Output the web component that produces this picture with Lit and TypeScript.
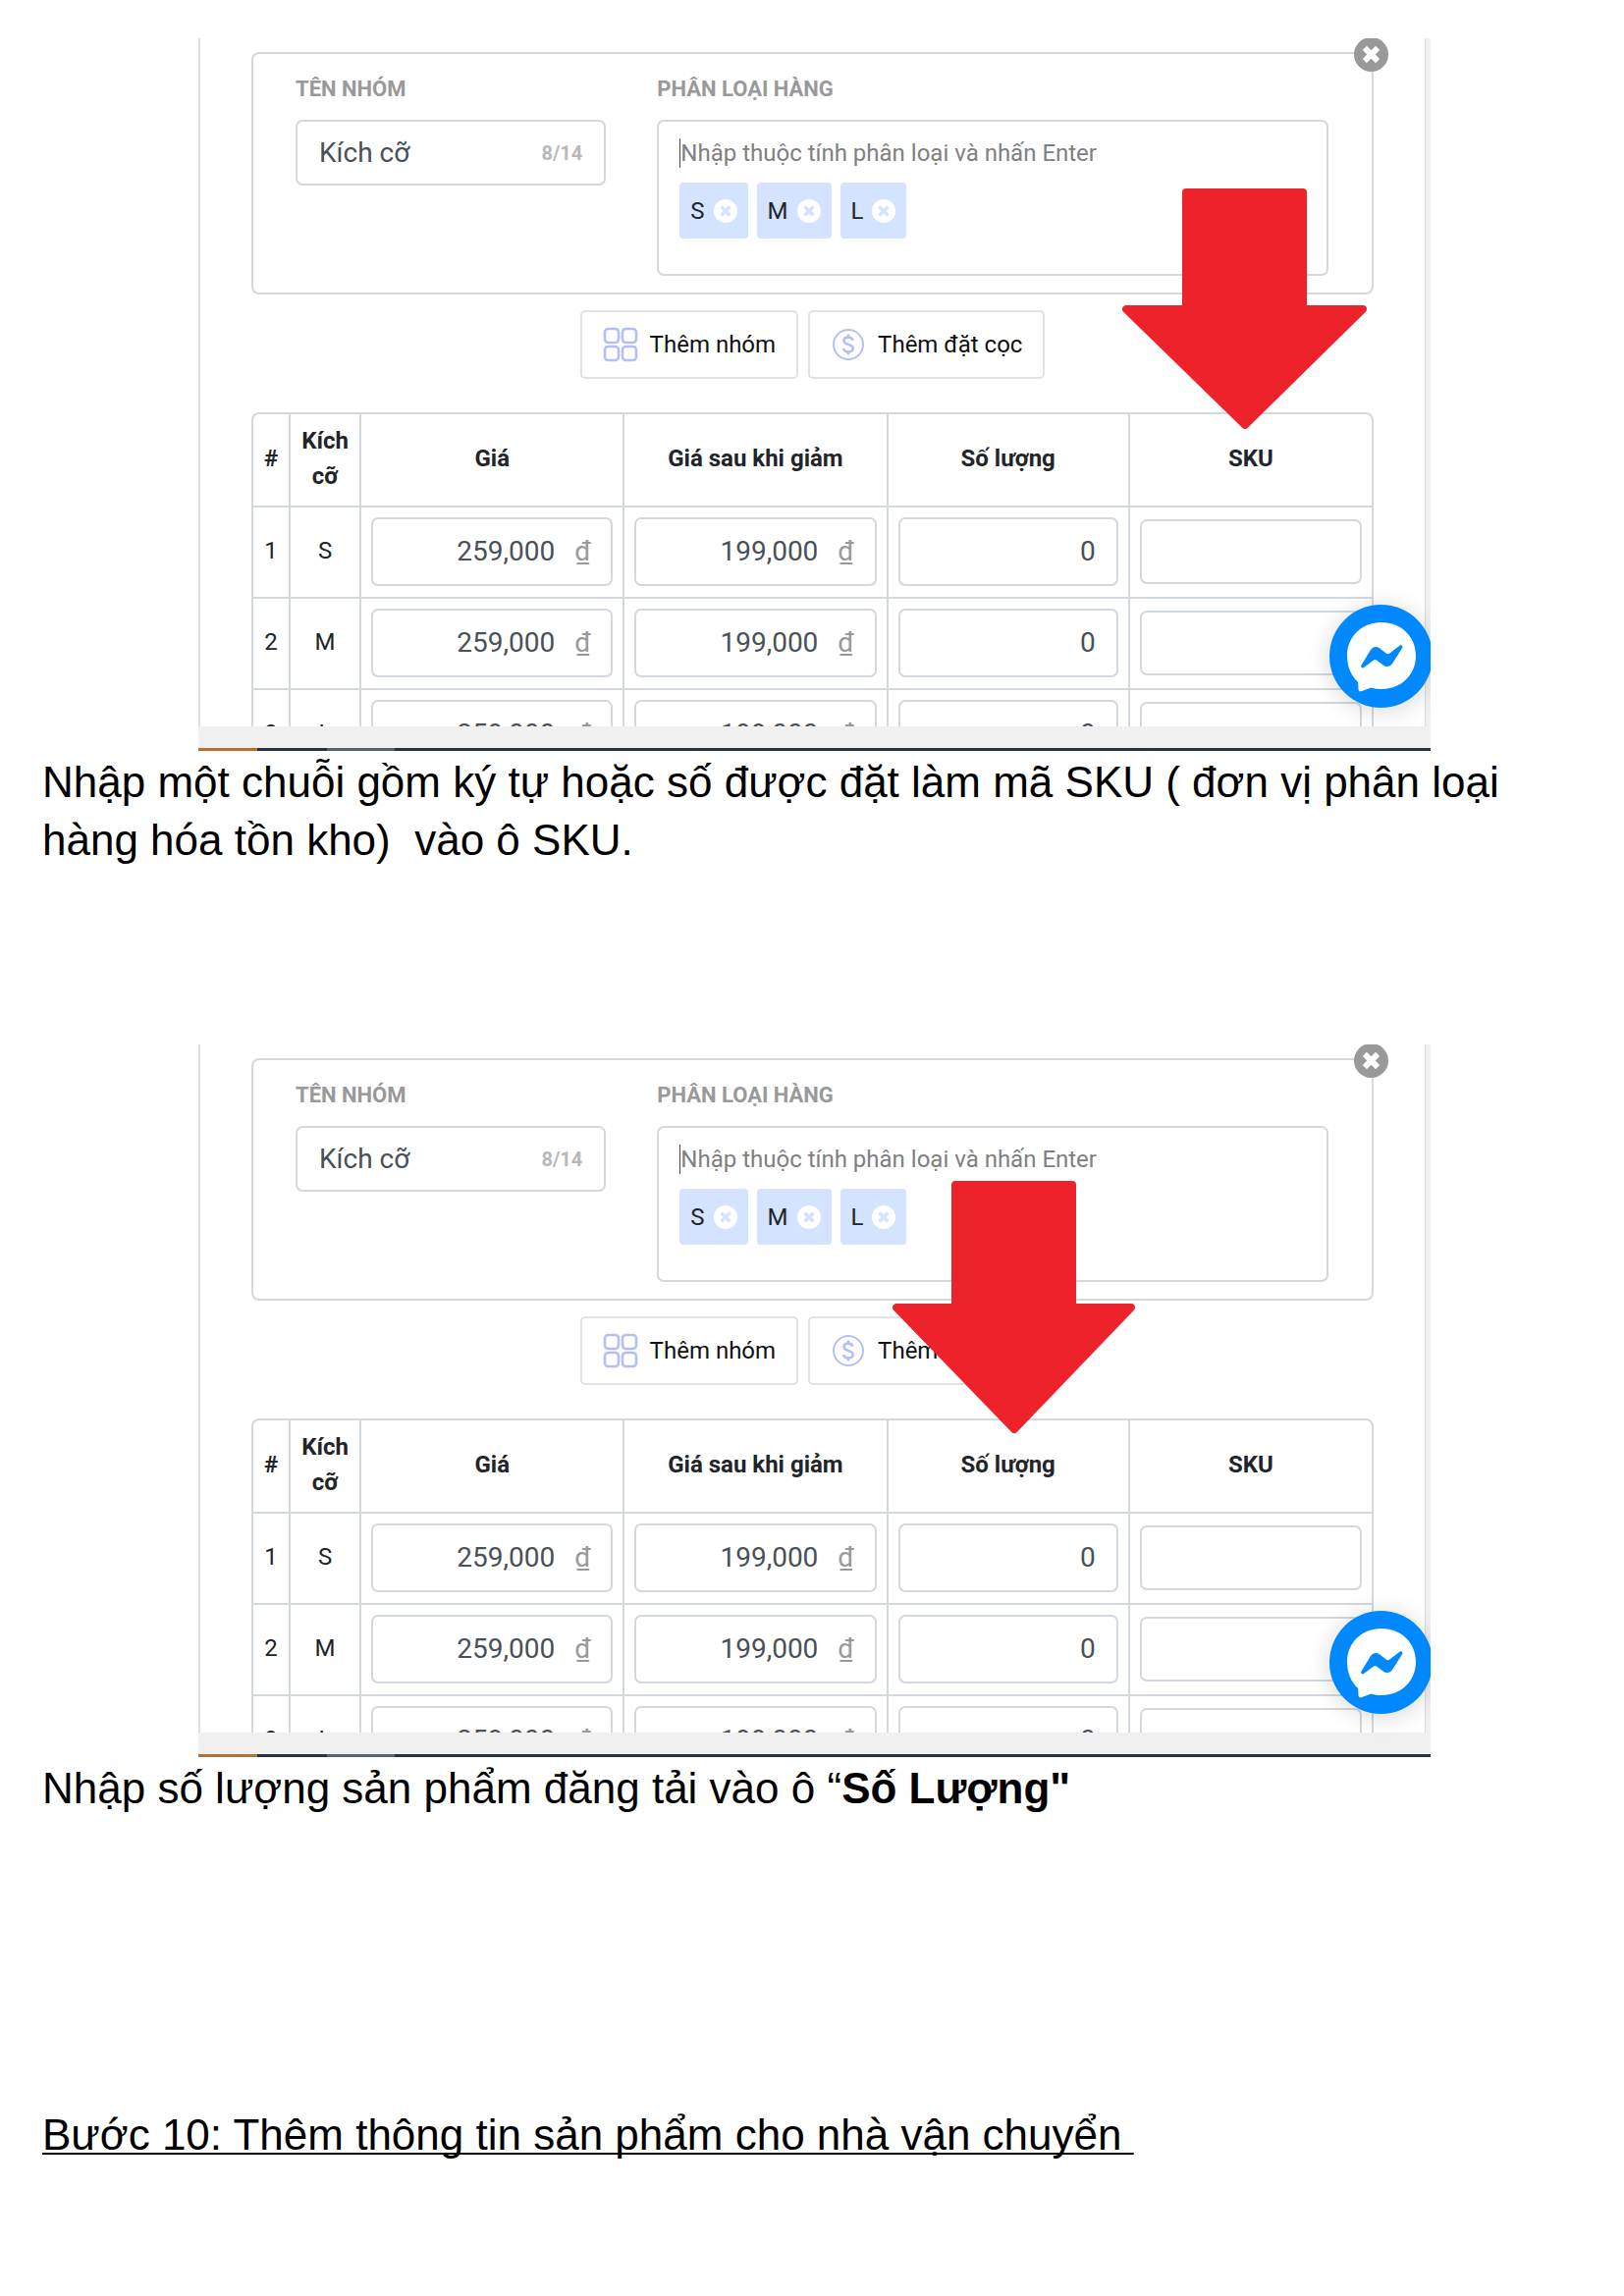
import { LitElement, html, svg, css } from "lit";
import { customElement, property } from "lit/decorators.js";

interface Variant {
  size: string;
  price: string;
  sale: string;
  stock: string;
}

const VARIANTS: Variant[] = [
  { size: "S", price: "259,000", sale: "199,000", stock: "0" },
  { size: "M", price: "259,000", sale: "199,000", stock: "0" },
  { size: "L", price: "259,000", sale: "199,000", stock: "0" },
];

const crossIcon = (cls: string, width: number) => html`
  <svg class=${cls} viewBox="0 0 36 36" aria-hidden="true">
    <circle class="disc" cx="18" cy="18" r="18"></circle>
    <path class="cross" d="M11.200 11.200 24.800 24.800M24.800 11.200 11.200 24.800" stroke-width=${width}></path>
  </svg>
`;

@customElement("variant-form")
export class VariantForm extends LitElement {
  @property() target = "sku";

  static styles = css`
    :host {
      display: block;
      font-family: Roboto, "Liberation Sans", sans-serif;
      font-size: 24px;
      line-height: 36px;
      color: #212529;
      --line: #d3d8de;
    }
    * {
      box-sizing: border-box;
    }
    .frame {
      position: relative;
      overflow: hidden;
    }
    .viewport {
      height: 701px;
      overflow: hidden;
      padding: 14px 53px 0 52px;
      border-left: 2px solid #dedede;
      border-right: 5px solid #f0f0f0;
      box-shadow: inset -1px 0 0 #dcdcdc;
    }
    .group {
      position: relative;
      display: grid;
      grid-template-columns: 316fr 683fr;
      column-gap: 52px;
      padding: 23px 44px 17px 43px;
      border: 2px solid var(--line);
      border-radius: 8px;
    }
    .field {
      display: flex;
      flex-direction: column;
      gap: 18px;
    }
    .caption {
      font-size: 22px;
      line-height: 26px;
      font-weight: 700;
      color: #999;
    }
    .box {
      display: flex;
      align-items: center;
      border: 2px solid var(--line);
      border-radius: 7px;
      background: #fff;
    }
    .name {
      height: 67px;
      padding: 0 22px;
    }
    input {
      flex: 1;
      min-width: 0;
      width: 100%;
      padding: 0;
      border: 0;
      outline: 0;
      background: none;
      font: 400 28px/36px Roboto, "Liberation Sans", sans-serif;
      color: #495057;
    }
    .count {
      font-size: 20px;
      font-weight: 700;
      color: #b8b8b8;
    }
    .tags {
      height: 159px;
      flex-direction: column;
      align-items: stretch;
      padding: 17px 21px;
      gap: 15px;
    }
    .tags input {
      flex: none;
      height: 30px;
      border-left: 1px solid #444;
      font-size: 24px;
      line-height: 30px;
    }
    .tags input::placeholder {
      color: #808080;
      opacity: 1;
    }
    .chips {
      display: flex;
      gap: 9px;
    }
    .chip {
      display: flex;
      align-items: center;
      gap: 9px;
      height: 57px;
      padding: 0 11px;
      border-radius: 4px;
      background: #d4e3ff;
    }
    button {
      margin: 0;
      padding: 0;
      border: 0;
      background: none;
      font: inherit;
      color: inherit;
    }
    .remove,
    .close {
      display: flex;
    }
    .chip-x {
      width: 24px;
      height: 24px;
    }
    .chip-x .disc {
      fill: #fff;
    }
    .chip-x .cross {
      stroke: #d4e3ff;
    }
    .close {
      position: absolute;
      top: -17px;
      right: -17px;
    }
    .close-x {
      width: 35px;
      height: 35px;
    }
    .close-x .disc {
      fill: #999;
    }
    .close-x .cross {
      stroke: #fff;
    }
    .actions {
      display: flex;
      justify-content: center;
      gap: 10px;
      padding: 16px 0 34px;
    }
    .action {
      display: flex;
      align-items: center;
      height: 70px;
      padding: 0 21px;
      gap: 12px;
      border: 2px solid #e2e2e2;
      border-radius: 5px;
      color: #111;
    }
    .action svg {
      width: 36px;
      height: 36px;
      fill: none;
      stroke: #b4bffa;
      stroke-width: 2.6;
    }
    .sheet {
      border: 2px solid var(--line);
      border-radius: 8px;
    }
    table {
      width: 100%;
      table-layout: fixed;
      border-collapse: separate;
      border-spacing: 0;
    }
    th,
    td {
      padding: 0 0 1px;
      text-align: center;
      border-right: 2px solid var(--line);
      border-bottom: 2px solid var(--line);
    }
    th:last-child,
    td:last-child {
      border-right: 0;
    }
    th {
      height: 95px;
      padding-bottom: 3px;
      font-weight: 700;
    }
    td {
      height: 93px;
    }
    .txt {
      padding-bottom: 3px;
    }
    .c-no {
      width: 38px;
    }
    .c-size {
      width: 72px;
    }
    .c-price {
      width: 268px;
    }
    .c-stock {
      width: 246px;
    }
    .cell {
      height: 70px;
      margin: 0 10px;
      padding: 0 21px;
      gap: 20px;
    }
    .cell input {
      text-align: right;
    }
    .cell.sku {
      height: 66px;
    }
    .unit {
      font-size: 28px;
      color: #999;
    }
    .strip {
      height: 22px;
      background: #f0f0f0;
    }
    .taskbar {
      display: flex;
      height: 3px;
      background: #26323d;
    }
    .seg-a {
      width: 60px;
      background: #b66f30;
    }
    .seg-b {
      width: 69px;
      margin-left: 71px;
      background: #58636a;
    }
    .chat {
      position: absolute;
      right: -2px;
      top: 577px;
      width: 105px;
      height: 105px;
      border-radius: 50%;
      background: #0088ff;
      box-shadow: 0 3px 24px rgba(0, 0, 0, 0.16);
    }
    .chat svg {
      display: block;
      width: 105px;
      height: 105px;
    }
    .arrow {
      position: absolute;
      fill: #ee222a;
      stroke: #ee222a;
      stroke-width: 8;
      stroke-linejoin: round;
    }
    .arrow.sku {
      top: 153px;
      left: 75%;
      width: 249px;
      height: 246px;
    }
    .arrow.stock {
      top: 139px;
      left: 56.3%;
      width: 248px;
      height: 258px;
    }
  `;

  private arrow() {
    return this.target === "sku"
      ? html`<svg class="arrow sku" viewBox="0 0 249 246" aria-hidden="true">
          ${svg`<path d="M65 4H184V123H245L125 241 4 123H65Z"></path>`}
        </svg>`
      : html`<svg class="arrow stock" viewBox="0 0 248 258" aria-hidden="true">
          ${svg`<path d="M64 4H183V129H243L124 253 4 129H64Z"></path>`}
        </svg>`;
  }

  private money(label: string, value: string) {
    return html`<div class="box cell">
      <input type="text" aria-label=${label} .value=${value} />
      <span class="unit">₫</span>
    </div>`;
  }

  render() {
    return html`
      <div class="frame">
        <div class="viewport">
          <section class="group">
            <div class="field">
              <label class="caption" for="name">TÊN NHÓM</label>
              <div class="box name">
                <input id="name" type="text" value="Kích cỡ" />
                <span class="count">8/14</span>
              </div>
            </div>
            <div class="field">
              <label class="caption" for="options">PHÂN LOẠI HÀNG</label>
              <div class="box tags">
                <input id="options" type="text" placeholder="Nhập thuộc tính phân loại và nhấn Enter" />
                <div class="chips">
                  ${VARIANTS.map(
                    (v) => html`<span class="chip"
                      >${v.size}<button class="remove" type="button" aria-label="Xóa ${v.size}">
                        ${crossIcon("chip-x", 5)}
                      </button></span
                    >`
                  )}
                </div>
              </div>
            </div>
            <button class="close" type="button" aria-label="Xóa nhóm">${crossIcon("close-x", 6)}</button>
          </section>

          <div class="actions">
            <button class="action" type="button">
              <svg viewBox="0 0 36 36" aria-hidden="true">
                <rect x="2" y="2" width="14" height="14" rx="3.5"></rect>
                <rect x="20" y="2" width="14" height="14" rx="3.5"></rect>
                <rect x="2" y="20" width="14" height="14" rx="3.5"></rect>
                <rect x="20" y="20" width="14" height="14" rx="3.5"></rect>
              </svg>
              Thêm nhóm
            </button>
            <button class="action" type="button">
              <svg viewBox="0 0 36 36" aria-hidden="true">
                <circle cx="18" cy="18" r="15" stroke-width="2"></circle>
                <path d="M22.5 13.8C22 11.6 20.300 10.600 18 10.600c-2.600 0-4.500 1.300-4.500 3.500 0 2.300 1.800 3 4.500 3.800s4.700 1.500 4.700 3.900c0 2.200-2 3.600-4.700 3.600-2.600 0-4.500-1.300-4.800-3.600M18 7.500v3.500M18 25v3.500"></path>
              </svg>
              Thêm đặt cọc
            </button>
          </div>

          <div class="sheet">
            <table>
              <colgroup>
                <col class="c-no" />
                <col class="c-size" />
                <col class="c-price" />
                <col class="c-price" />
                <col class="c-stock" />
                <col class="c-stock" />
              </colgroup>
              <thead>
                <tr>
                  <th>#</th>
                  <th>Kích cỡ</th>
                  <th>Giá</th>
                  <th>Giá sau khi giảm</th>
                  <th>Số lượng</th>
                  <th>SKU</th>
                </tr>
              </thead>
              <tbody>
                ${VARIANTS.map(
                  (v, i) => html`<tr>
                    <td class="txt">${i + 1}</td>
                    <td class="txt">${v.size}</td>
                    <td>${this.money("Giá", v.price)}</td>
                    <td>${this.money("Giá sau khi giảm", v.sale)}</td>
                    <td>
                      <div class="box cell"><input type="text" aria-label="Số lượng" .value=${v.stock} /></div>
                    </td>
                    <td>
                      <div class="box cell sku"><input type="text" aria-label="SKU" /></div>
                    </td>
                  </tr>`
                )}
              </tbody>
            </table>
          </div>
          <button class="chat" type="button" aria-label="Messenger">
            <svg viewBox="0 0 105 105" aria-hidden="true">
              <path fill="#fff" d="M53 18c20 0 35 14.500 35 34S73 86 53 86c-4 0-7-.5-10.500-1.500L33 88c-2 .8-3.500 0-3.500-2l-.3-7C22 72.500 18 63 18 52c0-19.500 15-34 35-34Z"></path>
              <path fill="#0088ff" d="M32.500 61.500 42 46c2-3.200 6-4 9-1.700l7 5.400c1 .7 2 .7 3 0l10.500-8c1.800-1.300 3.800.6 2.700 2.400L64 60c-2 3.200-6 4-9 1.700l-7-5.300c-1-.7-2-.7-3 0l-10 7.600c-1.800 1.300-3.600-.7-2.500-2.500Z"></path>
            </svg>
          </button>
        </div>
        <div class="strip"></div>
        <div class="taskbar"><span class="seg-a"></span><span class="seg-b"></span></div>
        ${this.arrow()}
      </div>
    `;
  }
}

@customElement("app-root")
export class AppRoot extends LitElement {
  static styles = css`
    :host {
      display: block;
      background: #fff;
    }
    .page {
      padding: 39px 38px 120px 43px;
      font-family: "Liberation Sans", Arial, sans-serif;
      font-size: 44px;
      line-height: 59px;
      color: #000;
    }
    variant-form {
      max-width: 1255px;
      margin: 0 auto;
    }
    p,
    h2 {
      margin: 0;
      font-size: 44px;
      font-weight: 400;
      white-space: pre-wrap;
    }
    .note {
      padding: 2px 0 179px;
    }
    .last {
      padding-bottom: 294px;
    }
    h2 {
      text-decoration: underline;
      text-decoration-thickness: 2px;
      text-decoration-skip-ink: none;
      text-underline-offset: 3px;
    }
  `;

  render() {
    return html`
      <main class="page">
        <variant-form target="sku"></variant-form>
        <p class="note">Nhập một chuỗi gồm ký tự hoặc số được đặt làm mã SKU ( đơn vị phân loại hàng hóa tồn kho)  vào ô SKU.</p>
        <variant-form target="stock"></variant-form>
        <p class="note last">Nhập số lượng sản phẩm đăng tải vào ô “<b>Số Lượng"</b></p>
        <h2>Bước 10: Thêm thông tin sản phẩm cho nhà vận chuyển&nbsp;</h2>
      </main>
    `;
  }
}
